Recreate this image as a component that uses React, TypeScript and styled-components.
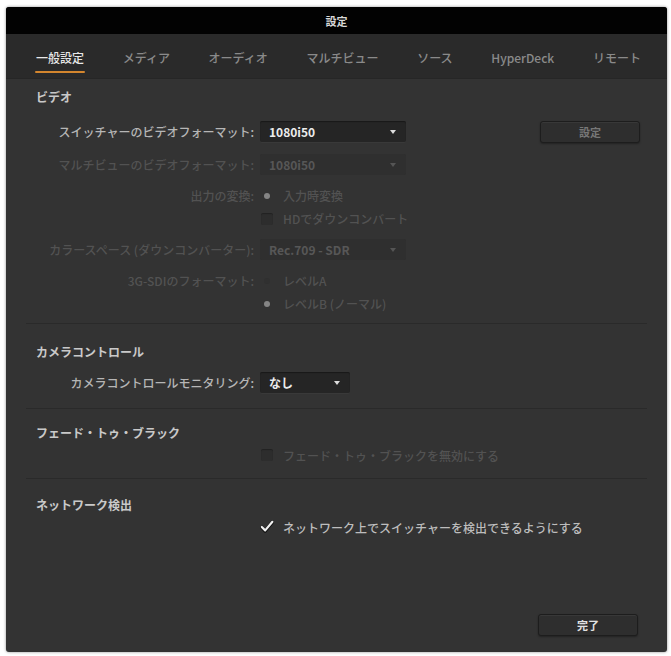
import React from "react";
import styled, { createGlobalStyle } from "styled-components";

const GlobalStyle = createGlobalStyle`
  html, body {
    margin: 0;
    padding: 0;
    background: #ffffff;
  }
  body {
    font-family: "Noto Sans CJK JP", "Noto Sans", "Liberation Sans", sans-serif;
  }
`;

const tabs = ["一般設定", "メディア", "オーディオ", "マルチビュー", "ソース", "HyperDeck", "リモート"];

const Dialog = styled.div`
  margin: 7px 4px 4px 6px;
  width: 661px;
  height: 645px;
  display: flex;
  flex-direction: column;
  background: #333333;
  border-radius: 3px;
  overflow: hidden;
  box-shadow: 0 0 3px rgba(0, 0, 0, 0.45);
`;

const TitleBar = styled.div`
  height: 27px;
  flex: 0 0 27px;
  background: #020202;
  color: #d8d8d8;
  font-size: 11px;
  font-weight: 700;
  display: flex;
  align-items: center;
  justify-content: center;
`;

const TabBar = styled.div`
  height: 44px;
  flex: 0 0 44px;
  background: #2a2a2a;
  border-bottom: 1px solid #262626;
  display: flex;
  justify-content: space-between;
  padding: 0 24px 0 28px;
`;

const Tab = styled.div<{ $active?: boolean }>`
  position: relative;
  padding: 16px 2px 0;
  line-height: 16px;
  font-size: 12px;
  font-weight: 500;
  color: ${(p) => (p.$active ? "#e8e8e8" : "#8a8a8a")};

  &::after {
    content: "";
    display: ${(p) => (p.$active ? "block" : "none")};
    height: 2px;
    margin: 5px -1px 0;
    background: #d4862e;
    border-radius: 1px;
  }
`;

const Body = styled.div`
  flex: 1;
  display: flex;
  flex-direction: column;
`;

const Section = styled.div<{ $pt: number; $pb: number; $last?: boolean }>`
  margin: 0 20px;
  padding: ${(p) => p.$pt}px 0 ${(p) => p.$pb}px;
  border-bottom: ${(p) => (p.$last ? "none" : "1px solid #2a2a2a")};
`;

const Heading = styled.div<{ $mb: number }>`
  padding-left: 10px;
  margin-bottom: ${(p) => p.$mb}px;
  line-height: 16px;
  font-size: 12px;
  font-weight: 700;
  color: #c9c9c9;
`;

const Row = styled.div<{ $stacked?: boolean; $compact?: boolean }>`
  display: flex;
  align-items: ${(p) => (p.$stacked ? "flex-start" : "center")};
  min-height: ${(p) => (p.$compact ? "24px" : "33px")};
  padding: ${(p) => (p.$stacked ? "3px 0" : "0")};
  box-sizing: border-box;
`;

const Label = styled.div<{ $disabled?: boolean; $stacked?: boolean }>`
  flex: 0 0 228px;
  margin-right: 6px;
  text-align: right;
  white-space: nowrap;
  font-size: 12px;
  font-weight: 500;
  line-height: ${(p) => (p.$stacked ? "23px" : "16px")};
  color: ${(p) => (p.$disabled ? "#525252" : "#b6b6b6")};
`;

const Select = styled.div<{ $width: number; $disabled?: boolean }>`
  width: ${(p) => p.$width}px;
  height: 21px;
  box-sizing: border-box;
  padding: 0 10px 0 9px;
  display: flex;
  align-items: center;
  justify-content: space-between;
  border-radius: 2px;
  background: ${(p) => (p.$disabled ? "#2f2f2f" : "#252525")};
  box-shadow: ${(p) =>
    p.$disabled ? "none" : "inset 0 1px 1px rgba(0,0,0,0.35), 0 1px 0 rgba(255,255,255,0.03)"};
  font-size: 12px;
  font-weight: 700;
  color: ${(p) => (p.$disabled ? "#575757" : "#ececec")};
`;

const Spacer = styled.div`
  flex: 1;
`;

const Button = styled.div<{ $dim?: boolean }>`
  width: 100px;
  height: 22px;
  box-sizing: border-box;
  display: flex;
  align-items: center;
  justify-content: center;
  border-radius: 3px;
  border: 1px solid #1d1d1d;
  background: #2e2e2e;
  box-shadow: inset 0 1px 0 rgba(255, 255, 255, 0.05), 0 1px 2px rgba(0, 0, 0, 0.35);
  font-size: 11px;
  font-weight: 700;
  color: ${(p) => (p.$dim ? "#777777" : "#e2e2e2")};
`;

const SettingButton = styled(Button)`
  margin-right: 7px;
`;

const Options = styled.div`
  display: flex;
  flex-direction: column;
`;

const Option = styled.div<{ $disabled?: boolean; $tall?: boolean }>`
  display: flex;
  align-items: center;
  height: ${(p) => (p.$tall ? "24px" : "23px")};
  font-size: 12px;
  font-weight: 500;
  white-space: nowrap;
  color: ${(p) => (p.$disabled ? "#525252" : "#bdbdbd")};
`;

const Indicator = styled.div`
  flex: 0 0 14px;
  height: 14px;
  margin-right: 9px;
  display: flex;
  align-items: center;
  justify-content: center;
`;

const RadioDot = styled.div<{ $on?: boolean }>`
  width: 6px;
  height: 6px;
  border-radius: 50%;
  background: ${(p) => (p.$on ? "#858585" : "#303030")};
`;

const Box = styled.div`
  width: 12px;
  height: 12px;
  border-radius: 2px;
  background: #2d2d2d;
  box-shadow: inset 0 1px 1px rgba(0, 0, 0, 0.25);
`;

const Footer = styled.div`
  margin-top: auto;
  display: flex;
  justify-content: flex-end;
  padding: 0 29px 16px 0;
`;

const Arrow = ({ dim }: { dim?: boolean }) => (
  <svg width="6" height="4" viewBox="0 0 6 4">
    <polygon points="0,0 6,0 3,4" fill={dim ? "#555555" : "#dddddd"} />
  </svg>
);

const CheckMark = () => (
  <svg width="14" height="14" viewBox="0 0 14 14">
    <path d="M1.8 7.4 L5.2 11 L12.4 2.2" fill="none" stroke="#111" strokeWidth="3.4" strokeLinecap="round" strokeLinejoin="round" />
    <path d="M1.8 7 L5.2 10.4 L12.4 1.8" fill="none" stroke="#f0f0f0" strokeWidth="2.2" strokeLinecap="round" strokeLinejoin="round" />
  </svg>
);

export default function App() {
  return (
    <>
      <GlobalStyle />
      <Dialog>
        <TitleBar>設定</TitleBar>
        <TabBar>
          {tabs.map((t, i) => (
            <Tab key={t} $active={i === 0}>
              {t}
            </Tab>
          ))}
        </TabBar>
        <Body>
          <Section $pt={10} $pb={5}>
            <Heading $mb={10}>ビデオ</Heading>
            <Row>
              <Label>スイッチャーのビデオフォーマット:</Label>
              <Select $width={146}>
                1080i50
                <Arrow />
              </Select>
              <Spacer />
              <SettingButton $dim>設定</SettingButton>
            </Row>
            <Row>
              <Label $disabled>マルチビューのビデオフォーマット:</Label>
              <Select $width={146} $disabled>
                1080i50
                <Arrow dim />
              </Select>
            </Row>
            <Row $stacked>
              <Label $disabled $stacked>出力の変換:</Label>
              <Options>
                <Option $disabled>
                  <Indicator>
                    <RadioDot $on />
                  </Indicator>
                  入力時変換
                </Option>
                <Option $disabled>
                  <Indicator>
                    <Box />
                  </Indicator>
                  HDでダウンコンバート
                </Option>
              </Options>
            </Row>
            <Row>
              <Label $disabled>カラースペース (ダウンコンバーター):</Label>
              <Select $width={146} $disabled>
                Rec.709 - SDR
                <Arrow dim />
              </Select>
            </Row>
            <Row $stacked>
              <Label $disabled $stacked>3G-SDIのフォーマット:</Label>
              <Options>
                <Option $disabled>
                  <Indicator>
                    <RadioDot />
                  </Indicator>
                  レベルA
                </Option>
                <Option $disabled>
                  <Indicator>
                    <RadioDot $on />
                  </Indicator>
                  レベルB (ノーマル)
                </Option>
              </Options>
            </Row>
          </Section>

          <Section $pt={20} $pb={9}>
            <Heading $mb={6}>カメラコントロール</Heading>
            <Row>
              <Label>カメラコントロールモニタリング:</Label>
              <Select $width={90}>
                なし
                <Arrow />
              </Select>
            </Row>
          </Section>

          <Section $pt={16} $pb={11}>
            <Heading $mb={2}>フェード・トゥ・ブラック</Heading>
            <Row $compact>
              <Label />
              <Option $disabled $tall>
                <Indicator>
                  <Box />
                </Indicator>
                フェード・トゥ・ブラックを無効にする
              </Option>
            </Row>
          </Section>

          <Section $pt={18} $pb={0} $last>
            <Heading $mb={2}>ネットワーク検出</Heading>
            <Row $compact>
              <Label />
              <Option $tall>
                <Indicator>
                  <CheckMark />
                </Indicator>
                ネットワーク上でスイッチャーを検出できるようにする
              </Option>
            </Row>
          </Section>

          <Footer>
            <Button>完了</Button>
          </Footer>
        </Body>
      </Dialog>
    </>
  );
}
